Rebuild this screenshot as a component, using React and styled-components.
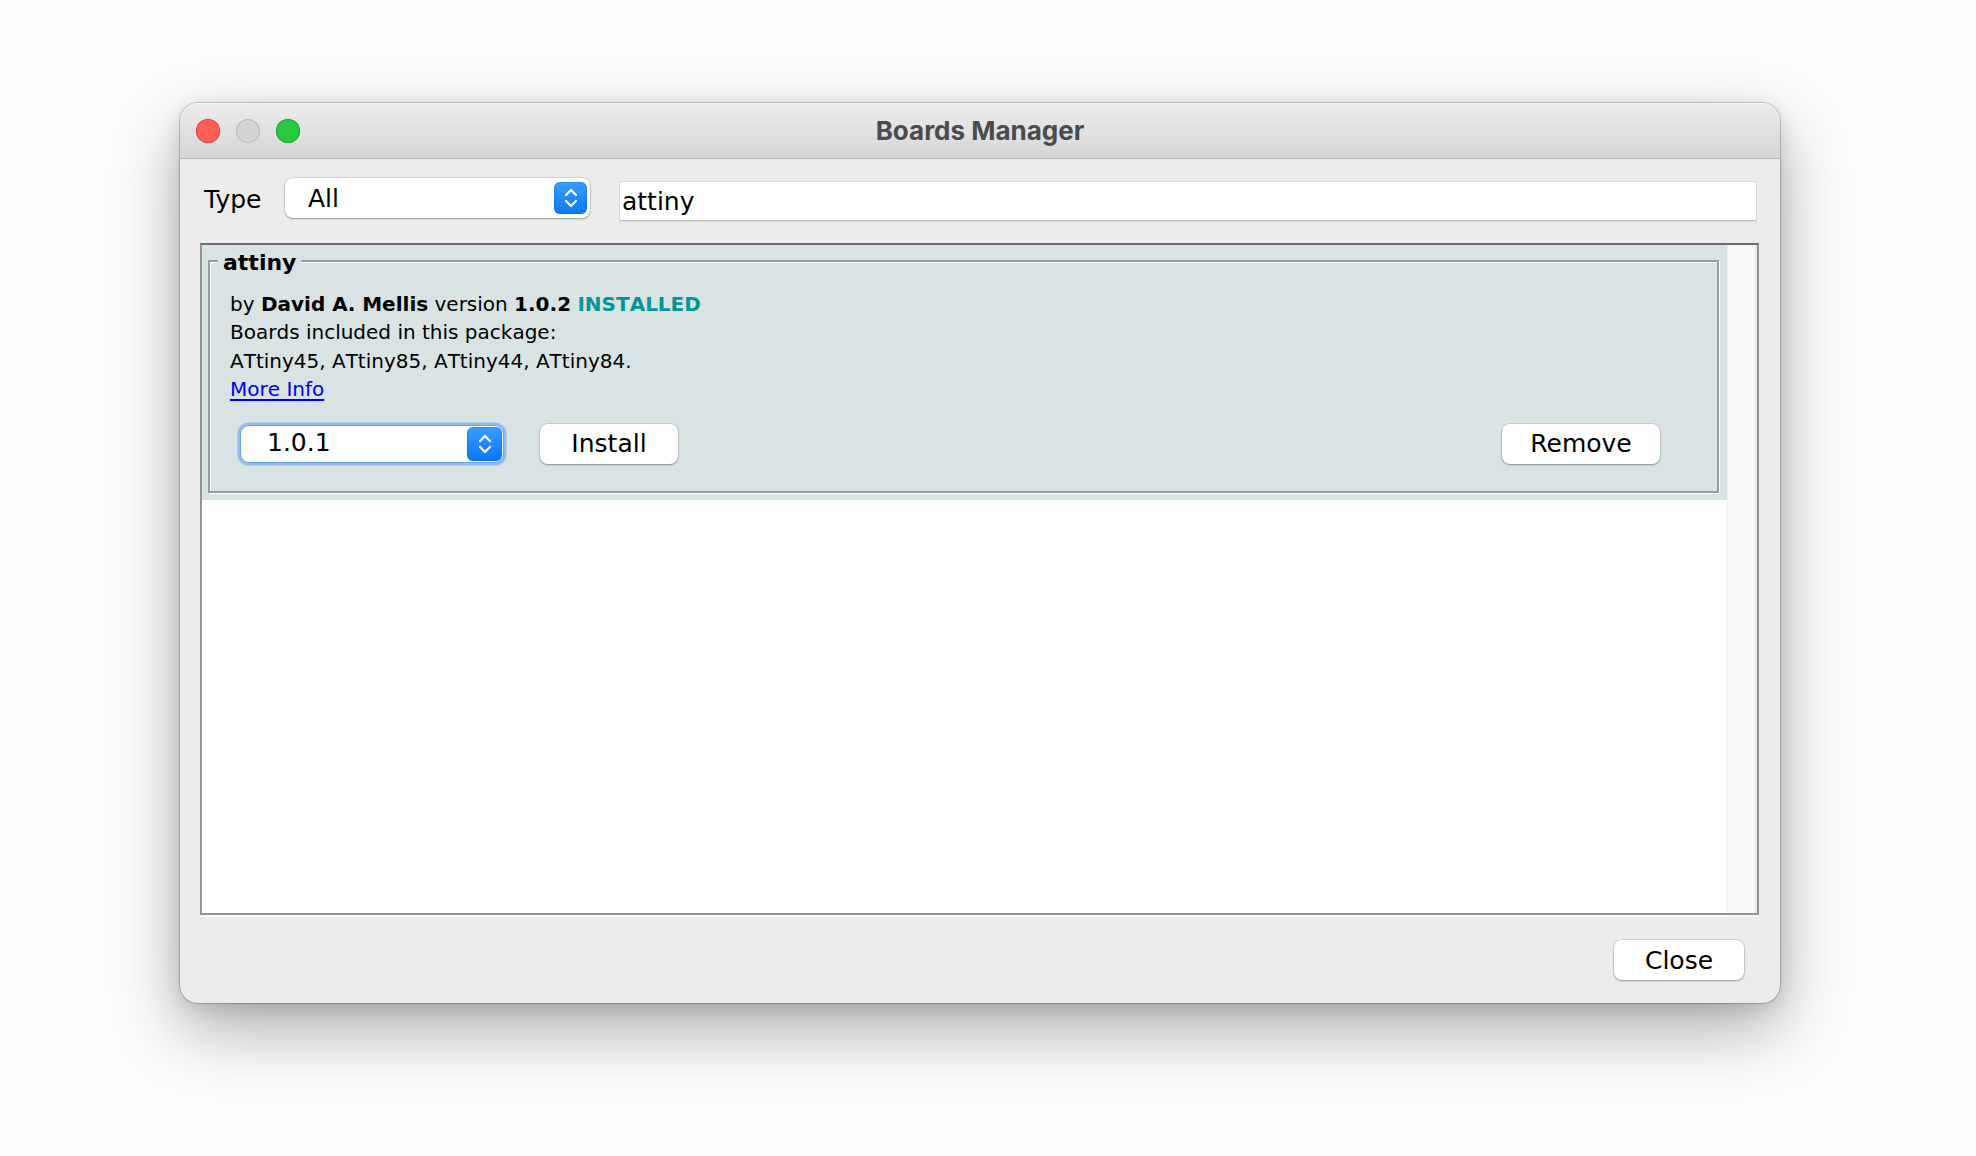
import React from "react";
import styled, { createGlobalStyle } from "styled-components";

const Global = createGlobalStyle`
  html, body { margin: 0; padding: 0; background: #fdfdfd; }
  body { font-family: "DejaVu Sans", Verdana, sans-serif; -webkit-font-smoothing: antialiased; }
  * { box-sizing: border-box; }
`;

const Desktop = styled.div`
  width: 1976px;
  height: 1156px;
  padding: 103px 0 0 180px;
  background: #fdfdfd;
  overflow: hidden;
`;

const Window = styled.div`
  width: 1600px;
  height: 900px;
  border-radius: 18px;
  background: #ececec;
  overflow: hidden;
  display: flex;
  flex-direction: column;
  box-shadow: 0 0 0 1px rgba(0, 0, 0, 0.2), 0 26px 70px rgba(0, 0, 0, 0.32),
    0 6px 20px rgba(0, 0, 0, 0.12);
`;

const TitleBar = styled.div`
  height: 56px;
  flex: 0 0 56px;
  display: grid;
  grid-template-columns: 1fr auto 1fr;
  align-items: center;
  padding: 0 16px;
  background: linear-gradient(#ececec, #d6d6d6);
  border-bottom: 1px solid #b9b9b9;
  box-shadow: inset 0 1px 0 rgba(255, 255, 255, 0.7);
`;

const Lights = styled.div`
  display: flex;
  gap: 16px;
`;

const Light = styled.span`
  width: 24px;
  height: 24px;
  border-radius: 50%;
  background: ${(p) => p.$fill};
  box-shadow: inset 0 0 0 1px ${(p) => p.$edge};
`;

const Title = styled.div`
  font-family: Inter, "Liberation Sans", sans-serif;
  font-weight: 700;
  font-size: 26px;
  color: #4b4b4b;
`;

const Body = styled.div`
  flex: 1;
  display: flex;
  flex-direction: column;
  padding: 19px 21px 23px 20px;
`;

const TopRow = styled.div`
  display: flex;
  align-items: flex-start;
  height: 43px;
  padding-left: 4px;
`;

const FieldLabel = styled.div`
  flex: 0 0 81px;
  height: 40px;
  line-height: 43px;
  font-size: 25px;
  color: #000;
`;

const Select = styled.div`
  flex: 0 0 auto;
  width: ${(p) => p.$w}px;
  height: ${(p) => p.$h}px;
  display: flex;
  align-items: center;
  justify-content: space-between;
  padding: 0 ${(p) => p.$inset}px 0 ${(p) => p.$pad}px;
  margin-left: ${(p) => p.$ml || 0}px;
  background: #fff;
  border-radius: 8px;
  font-size: 25px;
  color: #000;
  box-shadow: ${(p) =>
    p.$focused
      ? "0 0 0 1px #6aa6ee, 0 0 0 3.5px rgba(120, 175, 242, 0.75)"
      : "0 0 0 1px rgba(0,0,0,0.1), 0 1px 2px rgba(0,0,0,0.28)"};
`;

const Stepper = styled.span`
  width: ${(p) => p.$w}px;
  height: ${(p) => p.$h}px;
  border-radius: 6px;
  background: linear-gradient(#3b9cff, #0a78fb);
  display: flex;
  align-items: center;
  justify-content: center;
  box-shadow: inset 0 0 0 1px rgba(0, 80, 200, 0.25);
`;

const Search = styled.div`
  flex: 1;
  margin: 3px 2px 0 29px;
  height: 40px;
  background: #fff;
  border: 1px solid #dadada;
  border-bottom-color: #bfbfbf;
  box-shadow: 0 1px 0 rgba(0, 0, 0, 0.06);
  padding-left: 2px;
  font-size: 25px;
  line-height: 40px;
  color: #000;
`;

const List = styled.div`
  margin-top: 22px;
  height: 672px;
  border: 2px solid #939393;
  border-top-color: #6b6b6b;
  background: #fff;
  display: flex;
  box-shadow: 0 2px 0 #fafafa;
`;

const Entries = styled.div`
  flex: 1;
  display: flex;
  flex-direction: column;
`;

const Track = styled.div`
  flex: 0 0 30px;
  background: #f8f8f8;
  border-left: 1px solid #efefef;
  border-right: 2px solid #e9e9e9;
`;

const Entry = styled.div`
  background: #d9e3e3;
  padding: 1px 8px 7px 6px;
`;

const Group = styled.fieldset`
  margin: 0;
  min-width: 0;
  padding: 0 0 26px 8px;
  border: 2px solid #969c9c;
  box-shadow: inset 1px 1px 0 #fff, 1px 1px 0 #fff;
`;

const Legend = styled.legend`
  padding: 4px 5px 0;
  font-size: 22px;
  font-weight: 700;
  line-height: normal;
  color: #000;
  background: #d9e3e3;
`;

const Details = styled.div`
  padding: 15px 0 0 12px;
  font-size: 20px;
  line-height: 28.4px;
  font-kerning: none;
  color: #000;
`;

const Line = styled.div`
  white-space: nowrap;
`;

const Strong = styled.b`
  font-weight: 700;
  color: ${(p) => p.$color || "#000"};
`;

const Link = styled.a`
  color: #0000f0;
  text-decoration: underline;
  text-underline-offset: 3px;
  cursor: pointer;
`;

const Actions = styled.div`
  display: flex;
  align-items: center;
  height: 42px;
  margin: 19px 57px 0 8px;
`;

const Button = styled.button`
  flex: 0 0 auto;
  width: ${(p) => p.$w}px;
  height: 40px;
  margin-left: ${(p) => (p.$push ? "auto" : `${p.$ml || 0}px`)};
  padding: 0;
  border: none;
  border-radius: 8px;
  background: #fff;
  font-family: "DejaVu Sans", Verdana, sans-serif;
  font-size: 25px;
  color: #000;
  box-shadow: 0 0 0 1px rgba(0, 0, 0, 0.09), 0 1px 2px rgba(0, 0, 0, 0.3);
`;

const Footer = styled.div`
  margin-top: 25px;
  display: flex;
  justify-content: flex-end;
  padding-right: 15px;
`;

const Chevrons = () => (
  <svg width="16" height="22" viewBox="0 0 16 22" fill="none">
    <path
      d="M3 8 L8 3 L13 8 M3 14 L8 19 L13 14"
      stroke="#fff"
      strokeWidth="2.2"
      strokeLinecap="round"
      strokeLinejoin="round"
    />
  </svg>
);

export default function App() {
  return (
    <>
      <Global />
      <Desktop>
        <Window>
          <TitleBar>
            <Lights>
              <Light $fill="#ff5f57" $edge="#e0443e" />
              <Light $fill="#d4d4d4" $edge="#b9b9b9" />
              <Light $fill="#28c840" $edge="#1dad2b" />
            </Lights>
            <Title>Boards Manager</Title>
            <span />
          </TitleBar>
          <Body>
            <TopRow>
              <FieldLabel>Type</FieldLabel>
              <Select $w={305} $h={40} $pad={23} $inset={3}>
                <span>All</span>
                <Stepper $w={33} $h={32}>
                  <Chevrons />
                </Stepper>
              </Select>
              <Search>attiny</Search>
            </TopRow>
            <List>
              <Entries>
                <Entry>
                  <Group>
                    <Legend>attiny</Legend>
                    <Details>
                      <Line>
                        by <Strong>David A. Mellis</Strong> version{" "}
                        <Strong>1.0.2</Strong> <Strong $color="#00979c">INSTALLED</Strong>
                      </Line>
                      <Line>Boards included in this package:</Line>
                      <Line>ATtiny45, ATtiny85, ATtiny44, ATtiny84.</Line>
                      <Line>
                        <Link>More Info</Link>
                      </Line>
                      <Actions>
                        <Select $w={262} $h={36} $pad={26} $inset={1} $ml={3} $focused>
                          <span>1.0.1</span>
                          <Stepper $w={35} $h={34}>
                            <Chevrons />
                          </Stepper>
                        </Select>
                        <Button $w={138} $ml={37}>Install</Button>
                        <Button $w={158} $push>Remove</Button>
                      </Actions>
                    </Details>
                  </Group>
                </Entry>
              </Entries>
              <Track />
            </List>
            <Footer>
              <Button $w={130}>Close</Button>
            </Footer>
          </Body>
        </Window>
      </Desktop>
    </>
  );
}
